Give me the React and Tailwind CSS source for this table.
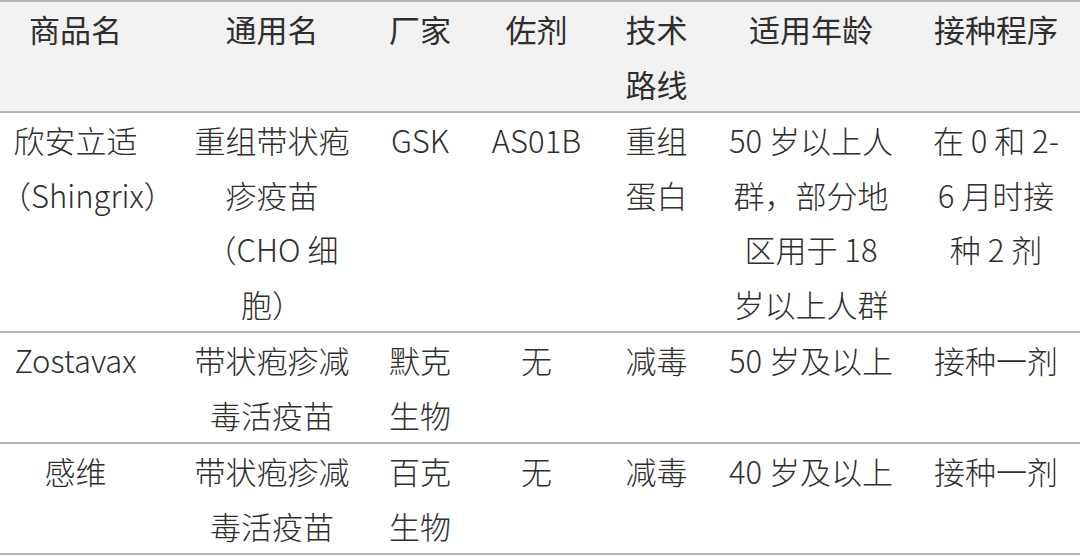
import React from "react";

const widths = ["w-[174px] pr-[23px]", "w-[196px]", "w-[100px]", "w-[133px]", "w-[107px]", "w-[202px]", "w-[168px]"];

const header = [["商品名"], ["通用名"], ["厂家"], ["佐剂"], ["技术", "路线"], ["适用年龄"], ["接种程序"]];

const rows = [
  [
    ["欣安立适", "（Shingrix）"],
    ["重组带状疱", "疹疫苗", "（CHO 细", "胞）"],
    ["GSK"],
    ["AS01B"],
    ["重组", "蛋白"],
    ["50 岁以上人", "群，部分地", "区用于 18", "岁以上人群"],
    ["在 0 和 2-", "6 月时接", "种 2 剂"],
  ],
  [
    ["Zostavax"],
    ["带状疱疹减", "毒活疫苗"],
    ["默克", "生物"],
    ["无"],
    ["减毒"],
    ["50 岁及以上"],
    ["接种一剂"],
  ],
  [
    ["感维"],
    ["带状疱疹减", "毒活疫苗"],
    ["百克", "生物"],
    ["无"],
    ["减毒"],
    ["40 岁及以上"],
    ["接种一剂"],
  ],
];

function Lines({ lines }) {
  return lines.map((l, k) => (
    <div key={k} className="h-[54.5px] leading-[54.5px]">{l}</div>
  ));
}

export default function App() {
  return (
    <div
      className="w-[1080px] h-[556px] bg-white overflow-hidden text-[31px] font-light text-[#2e2e2e]"
      style={{ fontFamily: '"Noto Sans CJK SC", "Noto Sans", sans-serif' }}
    >
      <table className="table-fixed w-[1080px] border-collapse">
        <thead>
          <tr className="bg-[#f2f2f2] border-t-2 border-b-2 border-[#b4b4b4]">
            {header.map((c, i) => (
              <td key={i} className={`${widths[i]} align-top text-center whitespace-nowrap p-0 font-normal`}>
                <Lines lines={c} />
              </td>
            ))}
          </tr>
        </thead>
        <tbody>
          {rows.map((r, ri) => (
            <tr key={ri} className="border-b-2 border-[#b4b4b4]">
              {r.map((c, i) => (
                <td key={i} className={`${widths[i]} align-top text-center whitespace-nowrap p-0`}>
                  <Lines lines={c} />
                </td>
              ))}
            </tr>
          ))}
        </tbody>
      </table>
    </div>
  );
}
